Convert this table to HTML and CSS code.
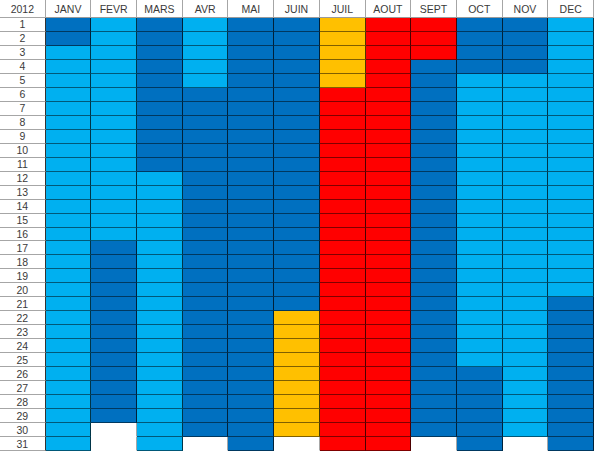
FILE: index.html
```html
<!DOCTYPE html>
<html lang="fr">
<head>
    <meta charset="UTF-8">
    <title>Calendrier 2012</title>
    <link rel="stylesheet" href="styles.css">
</head>
<body>
    <div class="sheet" id="sheet"></div>

    <script>
        // L = bleu clair, D = bleu foncé, O = orange, R = rouge, W = vide
        const months = [
            ['JANV', 'D2 L29'],
            ['FEVR', 'L16 D13 W2'],
            ['MARS', 'D11 L20'],
            ['AVR', 'L5 D25 W1'],
            ['MAI', 'D31'],
            ['JUIN', 'D21 O9 W1'],
            ['JUIL', 'O5 R26'],
            ['AOUT', 'R31'],
            ['SEPT', 'R3 D27 W1'],
            ['OCT', 'D4 L21 D6'],
            ['NOV', 'D4 L26 W1'],
            ['DEC', 'L20 D11']
        ];

        function expand(spec) {
            const days = [];
            spec.split(' ').forEach(part => {
                const count = parseInt(part.slice(1), 10);
                for (let i = 0; i < count; i++) days.push(part[0]);
            });
            return days;
        }

        const sheet = document.getElementById('sheet');
        const columns = months.map(m => expand(m[1]));

        function addCell(text, cls) {
            const cell = document.createElement('div');
            cell.className = 'cell ' + cls;
            cell.textContent = text;
            sheet.appendChild(cell);
        }

        addCell('2012', 'head label');
        months.forEach(m => addCell(m[0], 'head'));

        for (let day = 0; day < 31; day++) {
            addCell(day + 1, 'label');
            columns.forEach(col => addCell('', 'day c-' + col[day]));
        }
    </script>
</body>
</html>
```

FILE: styles.css
```css
* {
    margin: 0;
    padding: 0;
    box-sizing: border-box;
}

body {
    font-family: 'Liberation Sans', Arial, sans-serif;
    background: white;
}

.sheet {
    display: grid;
    grid-template-columns: repeat(13, 1fr);
    grid-template-rows: 18px repeat(31, 1fr);
    width: 594px;
    height: 451px;
}

.cell {
    display: flex;
    align-items: center;
    justify-content: center;
    font-size: 10.5px;
    color: #3a3a3a;
    border-right: 1px solid rgba(0, 0, 0, 0.7);
    border-bottom: 1px solid rgba(0, 0, 0, 0.5);
}

.head {
    background: white;
    border-right-color: #a6a6a6;
    border-bottom-color: #9a9a9a;
}

.label {
    background: white;
    border-bottom-color: #a6a6a6;
    border-right-color: #333;
}

.head.label {
    border-right-color: #a6a6a6;
}

.c-L { background: #00b0f0; }
.c-D { background: #0070c0; }
.c-O { background: #ffc000; }
.c-R { background: #ff0000; }

.c-W {
    background: white;
    border-right-color: #a6a6a6;
    border-bottom-color: white;
}
```
